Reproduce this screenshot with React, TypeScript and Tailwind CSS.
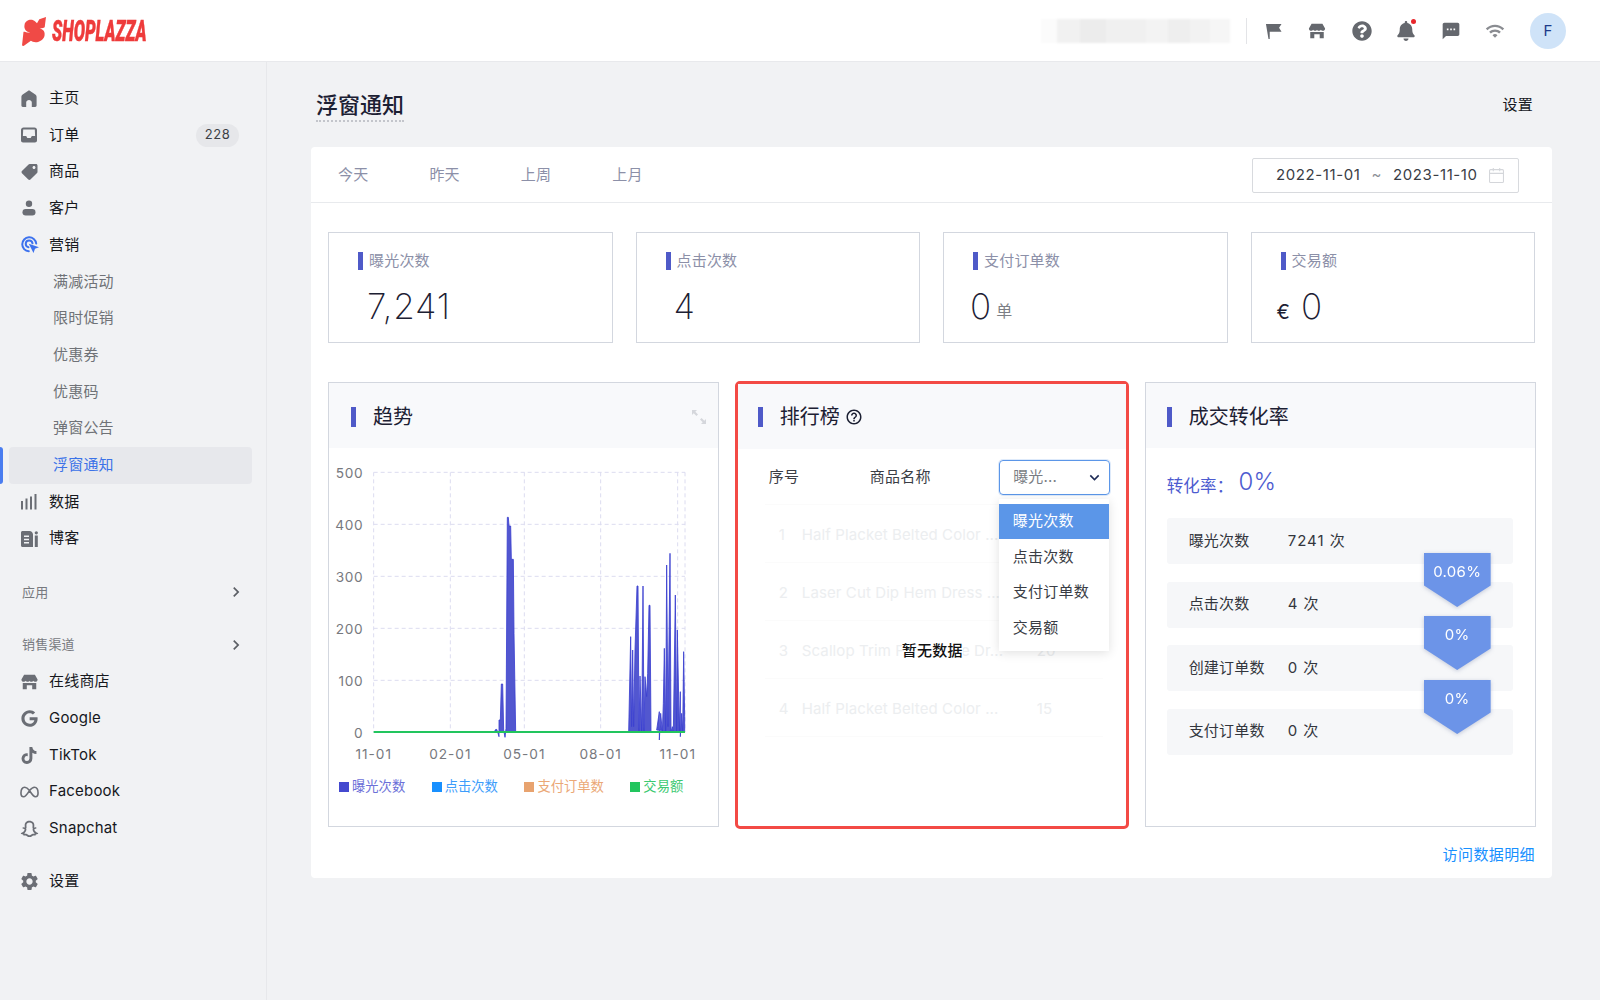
import { ReactNode } from "react";
import { FaTiktok, FaGoogle, FaQuestionCircle, FaBell, FaTag } from "react-icons/fa";
import { RiSnapchatLine } from "react-icons/ri";
import { MdSms, MdWifi, MdSettings, MdExpandMore, MdChevronRight, MdOutlineHelpOutline } from "react-icons/md";

const StoreIcon = ({ className }: { className?: string }) => (
  <svg viewBox="0 0 20 20" className={className} fill="currentColor">
    <path d="M4 2h12l3 5.200c0 1.600-1.200 2.600-2.400 2.600-1 0-1.900-.5-2.300-1.300-.4.8-1.300 1.300-2.300 1.300s-1.700-.5-2-1.300c-.3.8-1 1.300-2 1.300s-1.900-.5-2.300-1.300C5.300 9.300 4.400 9.800 3.400 9.800 2.200 9.800 1 8.800 1 7.200L4 2z" />
    <path d="M2.500 11h15v7h-4.500v-4.500h-6V18H2.500z" />
  </svg>
);

const HomeIcon = ({ className }: { className?: string }) => (
  <svg viewBox="0 0 16 17" className={className} fill="currentColor">
    <path d="M8 .2 14.300 4.400c.8.5 1.300 1.400 1.300 2.300v8.800c0 .8-.6 1.400-1.400 1.400h-3.400v-4.400c0-1.300-1.300-2.400-2.800-2.400s-2.800 1.100-2.800 2.400v4.400H1.800C1 16.900.4 16.300.4 15.500V6.700c0-.9.500-1.800 1.300-2.300L8 .2z" />
  </svg>
);

const InboxIcon = ({ className }: { className?: string }) => (
  <svg viewBox="0 0 16 16" className={className} fill="currentColor">
    <path fillRule="evenodd" d="M2.500.5h11C14.900.5 16 1.600 16 3v10.500c0 1.100-.9 2-2 2H2c-1.100 0-2-.9-2-2V3C0 1.600 1.100.5 2.500.5zM2.200 2.500 1.900 9h3.300L6.300 11h3.400l1.100-2h3.300l-.3-6.500H2.200z" />
  </svg>
);

const PersonIcon = ({ className }: { className?: string }) => (
  <svg viewBox="0 0 16 16" className={className} fill="currentColor">
    <circle cx="8" cy="3.800" r="3.200" />
    <rect x="1.500" y="9" width="13" height="6.500" rx="3.200" />
  </svg>
);

const TargetIcon = ({ className }: { className?: string }) => (
  <svg viewBox="0 0 18 18" className={className} fill="none" stroke="currentColor">
    <path strokeWidth="2" strokeLinecap="round" d="M7.800 15.300A7 7 0 1 1 15.200 7.500" />
    <path strokeWidth="2" strokeLinecap="round" d="M7.500 11.200A3.400 3.400 0 1 1 11.500 7.300" />
    <path fill="currentColor" stroke="none" d="M7.800 7.800 18 11.200l-4 1.600-1.500 4.200z" />
  </svg>
);

const BarsIcon = ({ className }: { className?: string }) => (
  <svg viewBox="0 0 16 16" className={className} fill="currentColor">
    <rect x="0" y="7" width="2" height="8.500" />
    <rect x="4.500" y="4.500" width="2" height="11" />
    <rect x="9" y="2.500" width="2" height="13" />
    <rect x="13.500" y="0" width="2" height="15.500" />
  </svg>
);

const BlogIcon = ({ className }: { className?: string }) => (
  <svg viewBox="0 0 17 16" className={className} fill="currentColor">
    <path fillRule="evenodd" d="M1.500 0h7C10.400 0 12 1.600 12 3.500V16H1.500C.7 16 0 15.300 0 14.500v-13C0 .7.700 0 1.500 0zM3 4.500V6h5V4.500H3zM3 7.700v1.500h5V7.700H3zM3 11v1.500h5V11H3z" />
    <rect x="13.800" y="4.500" width="3" height="11.500" />
    <circle cx="15.300" cy="1.800" r="1.600" />
  </svg>
);

const MetaIcon = ({ className }: { className?: string }) => (
  <svg viewBox="0 0 20 12" className={className} fill="none" stroke="currentColor" strokeWidth="1.700">
    <path d="M10 4.500C8 1.800 6.700 1 5 1 2.500 1 1 3.500 1 7c0 2.500 1 4 2.800 4 2 0 3.400-2 6.200-6.500C12.300 1.800 13.600 1 15.200 1 17.600 1 19 3.500 19 7c0 2.500-1 4-2.800 4-2.100 0-3.400-2.200-6.200-6.500z" />
  </svg>
);

const FlagIcon = ({ className }: { className?: string }) => (
  <svg viewBox="0 0 18 18" className={className} fill="currentColor">
    <path d="M1 1h16.500l-2.600 4 2.600 4.200H6.200L5 9.200V17H3.700L1 1z" />
  </svg>
);

const LogoMark = () => (
  <svg viewBox="0 0 24 29" className="h-[29px] w-[24px] shrink-0" fill="#f04a46">
    <path d="M24 0 22.700 10.200C20.600 11.800 18.400 11 16.300 11.600 19.300 11.700 23.300 13.200 22.600 18.200 22 23 15.800 26.600 10.800 24.800L8.900 23.700 1.600 29 0 28.500 1.500 14.800C3.800 14.800 6.200 16.200 8 15.200 4.600 15 1.500 12.600 2.600 7.500 3.500 3 9.800 1.300 13.200 4.500L15 6.200 17.300 2.300z" />
  </svg>
);

type NavProps = { icon: ReactNode; label: string; badge?: string };

function NavItem({ icon, label, badge }: NavProps) {
  return (
    <div className="flex h-[36.7px] items-center pl-[21px] pr-[27px]">
      <span className="flex w-[28px] items-center text-[#6b6e75]">{icon}</span>
      <span className="text-[15px] text-[#16181d]">{label}</span>
      {badge && (
        <span className="ml-auto flex h-[23px] w-[43px] items-center justify-center rounded-full bg-[#e6e7ea] text-[13px] tracking-[0.5px] text-[#3c3f45]">
          {badge}
        </span>
      )}
    </div>
  );
}

function SubItem({ label, active }: { label: string; active?: boolean }) {
  if (active) {
    return (
      <div className="relative flex h-[36.7px] items-center">
        <div className="absolute left-0 top-0 h-full w-[3px] rounded-r-sm bg-[#4a7df0]" />
        <div className="ml-[9px] flex h-full w-[243px] items-center rounded-sm bg-[#e7e8ec] pl-[44px] text-[15px] text-[#3b72e8]">
          {label}
        </div>
      </div>
    );
  }
  return (
    <div className="flex h-[36.7px] items-center pl-[53px] text-[15px] text-[#6f7277]">
      {label}
    </div>
  );
}

function SectionTitle({ label, className }: { label: string; className: string }) {
  return (
    <div className={`flex h-[36.7px] items-center justify-between pl-[22px] pr-[20px] text-[13px] text-[#77797e] ${className}`}>
      <span>{label}</span>
      <MdChevronRight className="text-[#5c5f65]" size={20} />
    </div>
  );
}

function Sidebar() {
  return (
    <aside className="w-[267px] shrink-0 border-r border-[#e7e8eb] bg-[#f1f2f4] pt-[18px]">
      <NavItem icon={<HomeIcon className="h-[17px] w-[16px]" />} label="主页" />
      <NavItem icon={<InboxIcon className="h-[16px] w-[16px]" />} label="订单" badge="228" />
      <NavItem icon={<FaTag className="h-[16px] w-[17px] -scale-x-100" />} label="商品" />
      <NavItem icon={<PersonIcon className="h-[16px] w-[16px]" />} label="客户" />
      <NavItem icon={<TargetIcon className="h-[18px] w-[18px] text-[#3d72ee]" />} label="营销" />
      <SubItem label="满减活动" />
      <SubItem label="限时促销" />
      <SubItem label="优惠券" />
      <SubItem label="优惠码" />
      <SubItem label="弹窗公告" />
      <SubItem label="浮窗通知" active />
      <NavItem icon={<BarsIcon className="h-[16px] w-[16px]" />} label="数据" />
      <NavItem icon={<BlogIcon className="h-[16px] w-[17px]" />} label="博客" />
      <SectionTitle label="应用" className="mt-[17px]" />
      <SectionTitle label="销售渠道" className="mt-[16px]" />
      <NavItem icon={<StoreIcon className="-ml-[1px] h-[18px] w-[19px]" />} label="在线商店" />
      <NavItem icon={<FaGoogle className="h-[17px] w-[17px]" />} label="Google" />
      <NavItem icon={<FaTiktok className="h-[17px] w-[16px]" />} label="TikTok" />
      <NavItem icon={<MetaIcon className="-ml-[1px] h-[12px] w-[19px]" />} label="Facebook" />
      <NavItem icon={<RiSnapchatLine className="-ml-[2px] h-[21px] w-[21px]" />} label="Snapchat" />
      <div className="mt-[16px]">
        <NavItem icon={<MdSettings className="-ml-[2px] h-[21px] w-[21px]" />} label="设置" />
      </div>
    </aside>
  );
}

function TopBar() {
  return (
    <header className="flex h-[62px] items-center border-b border-[#e8e9ec] bg-white pl-[22px] pr-[34px] pt-[1px]">
      <LogoMark />
      <span className="ml-[6px] w-[92px] origin-left scale-x-[0.56] whitespace-nowrap font-['Roboto'] text-[30px] font-black italic leading-none tracking-normal text-[#ee3b3b] [-webkit-text-stroke:0.5px_#ee3b3b]">
        SHOPLAZZA
      </span>
      <div className="ml-auto flex h-[24px] w-[189px] items-stretch blur-[1px]">
        <div className="w-[16px] bg-[#fbfbfb]" />
        <div className="w-[23px] bg-[#f1f1f1]" />
        <div className="w-[26px] bg-[#ececec]" />
        <div className="w-[40px] bg-[#f0f0f0]" />
        <div className="w-[22px] bg-[#f3f3f3]" />
        <div className="w-[22px] bg-[#eeeeee]" />
        <div className="w-[20px] bg-[#f2f2f2]" />
        <div className="w-[20px] bg-[#f6f6f6]" />
      </div>
      <div className="ml-[16px] h-[26px] w-px bg-[#e3e4e7]" />
      <div className="ml-[16px] flex items-center gap-[24.4px] text-[#65686e]">
        <span className="flex h-[20px] w-[20px] items-center justify-center">
          <FlagIcon className="h-[17px] w-[17px]" />
        </span>
        <span className="flex h-[20px] w-[20px] items-center justify-center">
          <StoreIcon className="h-[18px] w-[18px]" />
        </span>
        <FaQuestionCircle size={20} />
        <span className="relative">
          <FaBell size={20} />
          <span className="absolute -top-[2px] right-0 h-[5px] w-[5px] rounded-full bg-[#e8262b]" />
        </span>
        <MdSms size={20} />
        <MdWifi size={20} className="text-[#8a8c91]" />
      </div>
      <div className="ml-[25px] flex h-[36px] w-[36px] items-center justify-center rounded-full bg-[#cfe3f8] text-[15px] text-[#1d3a8a]">
        F
      </div>
    </header>
  );
}

function StatCard({ label, children }: { label: string; children: ReactNode }) {
  return (
    <div className="h-[111px] border border-[#d3d7df] pl-[29px] pt-[19px]">
      <div className="flex h-[18px] items-center gap-[6px] text-[15px] text-[#8c90a8]">
        <span className="h-[18px] w-[5px] bg-[#4f5ac8]" />
        {label}
      </div>
      {children}
    </div>
  );
}

const clusters: number[][][] = [
  [
    [525, 1056], [525, 1050], [530, 1048], [533, 1056], [537, 1070], [537, 1020], [541, 1020], [544, 912], [548, 912], [551, 1050], [555, 1072],
    [558, 1045], [562, 412], [565, 412], [567, 438], [572, 438], [574, 538], [580, 538], [582, 760], [587, 1056],
  ],
  [
    [926, 1056], [932, 770], [935, 1040], [938, 810], [941, 1040], [945, 810], [951, 618], [954, 618], [957, 1056], [960, 888],
    [965, 1056], [969, 618], [972, 1056], [975, 890], [980, 950], [983, 880], [987, 676], [990, 676], [993, 1056],
  ],
  [
    [1010, 1050], [1018, 995], [1018, 1080], [1022, 1000], [1027, 1056], [1030, 970], [1033, 805], [1037, 1056], [1040, 555], [1044, 1040], [1050, 520],
    [1053, 1056], [1057, 1040], [1060, 1056], [1066, 645], [1070, 1056], [1072, 750], [1078, 1056], [1081, 935], [1081, 1070], [1085, 1000],
    [1088, 1056], [1091, 815], [1094, 1010], [1094, 1056],
  ],
];
const toPoints = (pts: number[][]) => pts.map((p) => p.join(",")).join(" ");

function TrendChart() {
  const yTicks = [
    { y: 277, label: "500" },
    { y: 433, label: "400" },
    { y: 589, label: "300" },
    { y: 745, label: "200" },
    { y: 901, label: "100" },
    { y: 1057, label: "0" },
  ];
  const xTicks = [
    { x: 161, label: "11-01" },
    { x: 391, label: "02-01" },
    { x: 613, label: "05-01" },
    { x: 842, label: "08-01" },
    { x: 1073, label: "11-01" },
  ];
  return (
    <svg viewBox="27 207 1167 963" className="mt-[1px] block h-[321px] w-[389px]">
      {yTicks.map((t) => (
        <g key={t.y}>
          <line x1="161" x2="1095" y1={t.y} y2={t.y} stroke="#dcdcf0" strokeWidth="3" strokeDasharray="12 9" />
          <text x="130" y={t.y + 17} textAnchor="end" fontSize="41" fill="#77797e" letterSpacing="2">
            {t.label}
          </text>
        </g>
      ))}
      {xTicks.map((t) => (
        <g key={t.x}>
          <line x1={t.x} x2={t.x} y1="277" y2="1057" stroke="#dcdcf0" strokeWidth="3" strokeDasharray="12 9" />
          <text x={t.x} y="1138" textAnchor="middle" fontSize="41" fill="#77797e" letterSpacing="3">
            {t.label}
          </text>
        </g>
      ))}
      <line x1="1095" x2="1095" y1="277" y2="1057" stroke="#dcdcf0" strokeWidth="3" strokeDasharray="12 9" />
      {clusters.map((c, i) => (
        <polygon key={i} points={toPoints(c)} fill="#5257cf" stroke="#3a3ed0" strokeWidth="2.500" />
      ))}
      <line x1="161" x2="1095" y1="1056" y2="1056" stroke="#22c55e" strokeWidth="6" />
    </svg>
  );
}

function PanelHead({ title, children, barLeft }: { title: string; children?: ReactNode; barLeft: string }) {
  return (
    <div className={`flex h-[65px] items-center gap-[17px] bg-[#f8f9fb] pt-[2px] ${barLeft}`}>
      <span className="h-[20px] w-[5px] bg-[#4f5ac8]" />
      <span className="text-[20px] tracking-normal text-[#1c2033]">{title}</span>
      {children}
    </div>
  );
}

const legend = [
  { label: "曝光次数", box: "bg-[#4449cf]", text: "text-[#6c70d8]" },
  { label: "点击次数", box: "bg-[#1890ff]", text: "text-[#3d9dfb]" },
  { label: "支付订单数", box: "bg-[#e8a36f]", text: "text-[#eba877]" },
  { label: "交易额", box: "bg-[#22c55e]", text: "text-[#3cc971]" },
];

function TrendPanel() {
  return (
    <div className="border border-[#d3d7df]">
      <PanelHead title="趋势" barLeft="pl-[22px] pr-[11px]">
        <svg viewBox="0 0 16 16" className="ml-auto h-[16px] w-[16px] text-[#d5d7dc]" fill="currentColor">
          <path d="M1 1h5L4.300 2.700 7 5.400 5.400 7 2.700 4.300 1 6zM15 15h-5l1.700-1.700L9 10.600 10.600 9l2.700 2.700L15 10z" />
        </svg>
      </PanelHead>
      <TrendChart />
      <div className="flex gap-[26.500px] pl-[10px] pt-[7px] text-[13.300px] tracking-normal">
        {legend.map((l) => (
          <div key={l.label} className="flex items-center gap-[3px]">
            <span className={`h-[10px] w-[10px] ${l.box}`} />
            <span className={l.text}>{l.label}</span>
          </div>
        ))}
      </div>
    </div>
  );
}

const ranks = [
  { n: 1, name: "Half Placket Belted Color ...", v: "30" },
  { n: 2, name: "Laser Cut Dip Hem Dress ...", v: "25" },
  { n: 3, name: "Scallop Trim Flare Lace Dr...", v: "20" },
  { n: 4, name: "Half Placket Belted Color ...", v: "15" },
];

function RankPanel() {
  return (
    <div className="-mx-[1.500px] -my-[1.500px] rounded-[5px] border-[3.500px] border-[#f34a45]">
      <PanelHead title="排行榜" barLeft="pl-[20px]">
        <MdOutlineHelpOutline size={18} className="-ml-[12px] text-[#1c2033]" />
      </PanelHead>
      <div className="relative pt-[11px]">
        <div className="flex items-center pl-[31px] pr-[16px] text-[15px] text-[#3a3d45]">
          <span className="w-[101px]">序号</span>
          <span>商品名称</span>
          <div className="ml-auto flex h-[35px] w-[111px] items-center justify-between rounded-sm border border-[#5b96e8] pl-[13px] pr-[5px] shadow-[0_0_0_1px_rgba(91,150,232,0.2)]">
            <span className="text-[#7a7d83]">曝光...</span>
            <MdExpandMore size={19} className="text-[#1c2a55]" />
          </div>
        </div>
        <div className="ml-[27px] mr-[23px] mt-[9px] border-t border-[#fbfbfb]">
          {ranks.map((r) => (
            <div key={r.n} className="flex h-[58px] items-center border-b border-[#fbfbfb] pl-[14px] pt-[4px] text-[15px] tracking-[0.1px] text-[#eceef0]">
              <span className="w-[23px]">{r.n}</span>
              <span className="w-[235px] whitespace-nowrap">{r.name}</span>
              <span>{r.v}</span>
            </div>
          ))}
        </div>
        <div className="absolute left-[164px] top-[191px] bg-white text-[15px] font-medium leading-[22px] text-[#111]">
          暂无数据
        </div>
        <div className="absolute left-[261px] top-[50px] w-[110px] bg-white py-[5px] text-[15px] text-[#3a3d45] shadow-[0_2px_10px_rgba(0,0,0,0.12)]">
          <div className="flex h-[35.700px] items-center bg-[#5b96e8] pl-[14px] text-white">曝光次数</div>
          <div className="flex h-[35.700px] items-center pl-[14px]">点击次数</div>
          <div className="flex h-[35.700px] items-center pl-[14px]">支付订单数</div>
          <div className="flex h-[35.700px] items-center pl-[14px]">交易额</div>
        </div>
      </div>
    </div>
  );
}

const funnelRows = [
  { label: "曝光次数", value: "7241 次" },
  { label: "点击次数", value: "4 次" },
  { label: "创建订单数", value: "0 次" },
  { label: "支付订单数", value: "0 次" },
];

function Arrow({ text, className }: { text: string; className: string }) {
  return (
    <div className={`absolute left-[257px] drop-shadow-[0_1px_2px_rgba(40,60,120,0.25)] ${className}`}>
      <div className="h-[54px] w-[67px] bg-[#6c94e8] pt-[9px] text-center text-[15px] leading-[20px] tracking-[0.3px] text-white [clip-path:polygon(0_0,100%_0,100%_60%,50%_100%,0_60%)]">
        {text}
      </div>
    </div>
  );
}

function FunnelPanel() {
  return (
    <div className="border border-[#d3d7df]">
      <PanelHead title="成交转化率" barLeft="pl-[21px]" />
      <div className="pl-[21px] pr-[22px] pt-[17px]">
        <div className="flex h-[34px] items-end text-[#4d5bd0]">
          <span className="text-[16.500px] leading-[25px]">转化率：</span>
          <span className="ml-[5px] text-[24px] font-light leading-[34px]">0%</span>
        </div>
        <div className="relative mt-[19px] flex flex-col gap-[17.500px]">
          {funnelRows.map((r) => (
            <div key={r.label} className="flex h-[46px] items-center rounded-[3px] bg-[#f6f7f9] pl-[22px] text-[15px] text-[#33363d]">
              <span className="w-[99px]">{r.label}</span>
              <span className="tracking-[1px]">{r.value}</span>
            </div>
          ))}
          <Arrow text="0.06%" className="top-[35px]" />
          <Arrow text="0%" className="top-[98px]" />
          <Arrow text="0%" className="top-[162px]" />
        </div>
      </div>
    </div>
  );
}

function CalendarIcon() {
  return (
    <svg viewBox="0 0 14 14" className="h-[15px] w-[15px] text-[#d4d6da]" fill="none" stroke="currentColor">
      <rect x="0.500" y="1.500" width="13" height="12" rx="1" />
      <path d="M.5 5h13M4 0v3M10 0v3" />
    </svg>
  );
}

export default function App() {
  return (
    <div className="flex min-h-[1000px] flex-col bg-[#f1f2f4] font-[Inter,'Noto_Sans_CJK_SC',sans-serif] tracking-[0.2px]">
      <TopBar />
      <div className="flex flex-1">
        <Sidebar />
        <main className="flex-1 pl-[44px] pr-[48px]">
          <div className="flex h-[85px] items-center justify-between pl-[5px] pr-[19px] pt-[1px]">
            <h1 className="mt-[2px] border-b-2 border-dotted border-[#c3c5cb] text-[22px] font-medium leading-[29px] tracking-normal text-[#1c2033]">
              浮窗通知
            </h1>
            <span className="text-[15px] text-[#16181d]">设置</span>
          </div>
          <section className="h-[731px] rounded-[4px] bg-white">
            <div className="flex h-[56px] items-center border-b border-[#e8eaed] pl-[27px] pr-[33px] pt-[2px] text-[15px] text-[#8c90a8]">
              <div className="flex gap-[61px]">
                <span>今天</span>
                <span>昨天</span>
                <span>上周</span>
                <span>上月</span>
              </div>
              <div className="ml-auto flex h-[35px] w-[267px] items-center rounded-[2px] border border-[#d8dade] pl-[23px] text-[15px] tracking-[0.6px] text-[#3a3d45]">
                <span>2022-11-01</span>
                <span className="ml-[11px] text-[#8c8f96]">~</span>
                <span className="ml-[11px]">2023-11-10</span>
                <span className="ml-[11px]">
                  <CalendarIcon />
                </span>
              </div>
            </div>
            <div className="grid grid-cols-4 gap-[23px] pl-[17px] pr-[17px] pt-[29px]">
              <StatCard label="曝光次数">
                <div className="mt-[16px] pl-[9px] text-[35px] font-extralight leading-[40px] tracking-[0.8px] text-[#1c2033]">7,241</div>
              </StatCard>
              <StatCard label="点击次数">
                <div className="mt-[16px] pl-[8px] text-[35px] font-extralight leading-[40px] text-[#1c2033]">4</div>
              </StatCard>
              <StatCard label="支付订单数">
                <div className="-ml-[3px] mt-[16px] flex items-end gap-[5px] text-[35px] font-extralight leading-[40px] text-[#1c2033]">
                  0<span className="pb-[3px] text-[16px] font-normal leading-[24px] text-[#7c7f86]">单</span>
                </div>
              </StatCard>
              <StatCard label="交易额">
                <div className="-ml-[4px] mt-[16px] flex items-end gap-[11px] text-[35px] font-extralight leading-[40px] text-[#1c2033]">
                  <span className="pb-[2px] text-[20px] font-normal leading-[24px]">€</span>0
                </div>
              </StatCard>
            </div>
            <div className="mt-[39px] grid h-[445px] grid-cols-3 gap-[17px] pl-[17px] pr-[16px]">
              <TrendPanel />
              <RankPanel />
              <FunnelPanel />
            </div>
            <div className="mt-[17px] pr-[17px] text-right text-[15px] tracking-[0.4px] text-[#1890ff]">访问数据明细</div>
          </section>
        </main>
      </div>
    </div>
  );
}
